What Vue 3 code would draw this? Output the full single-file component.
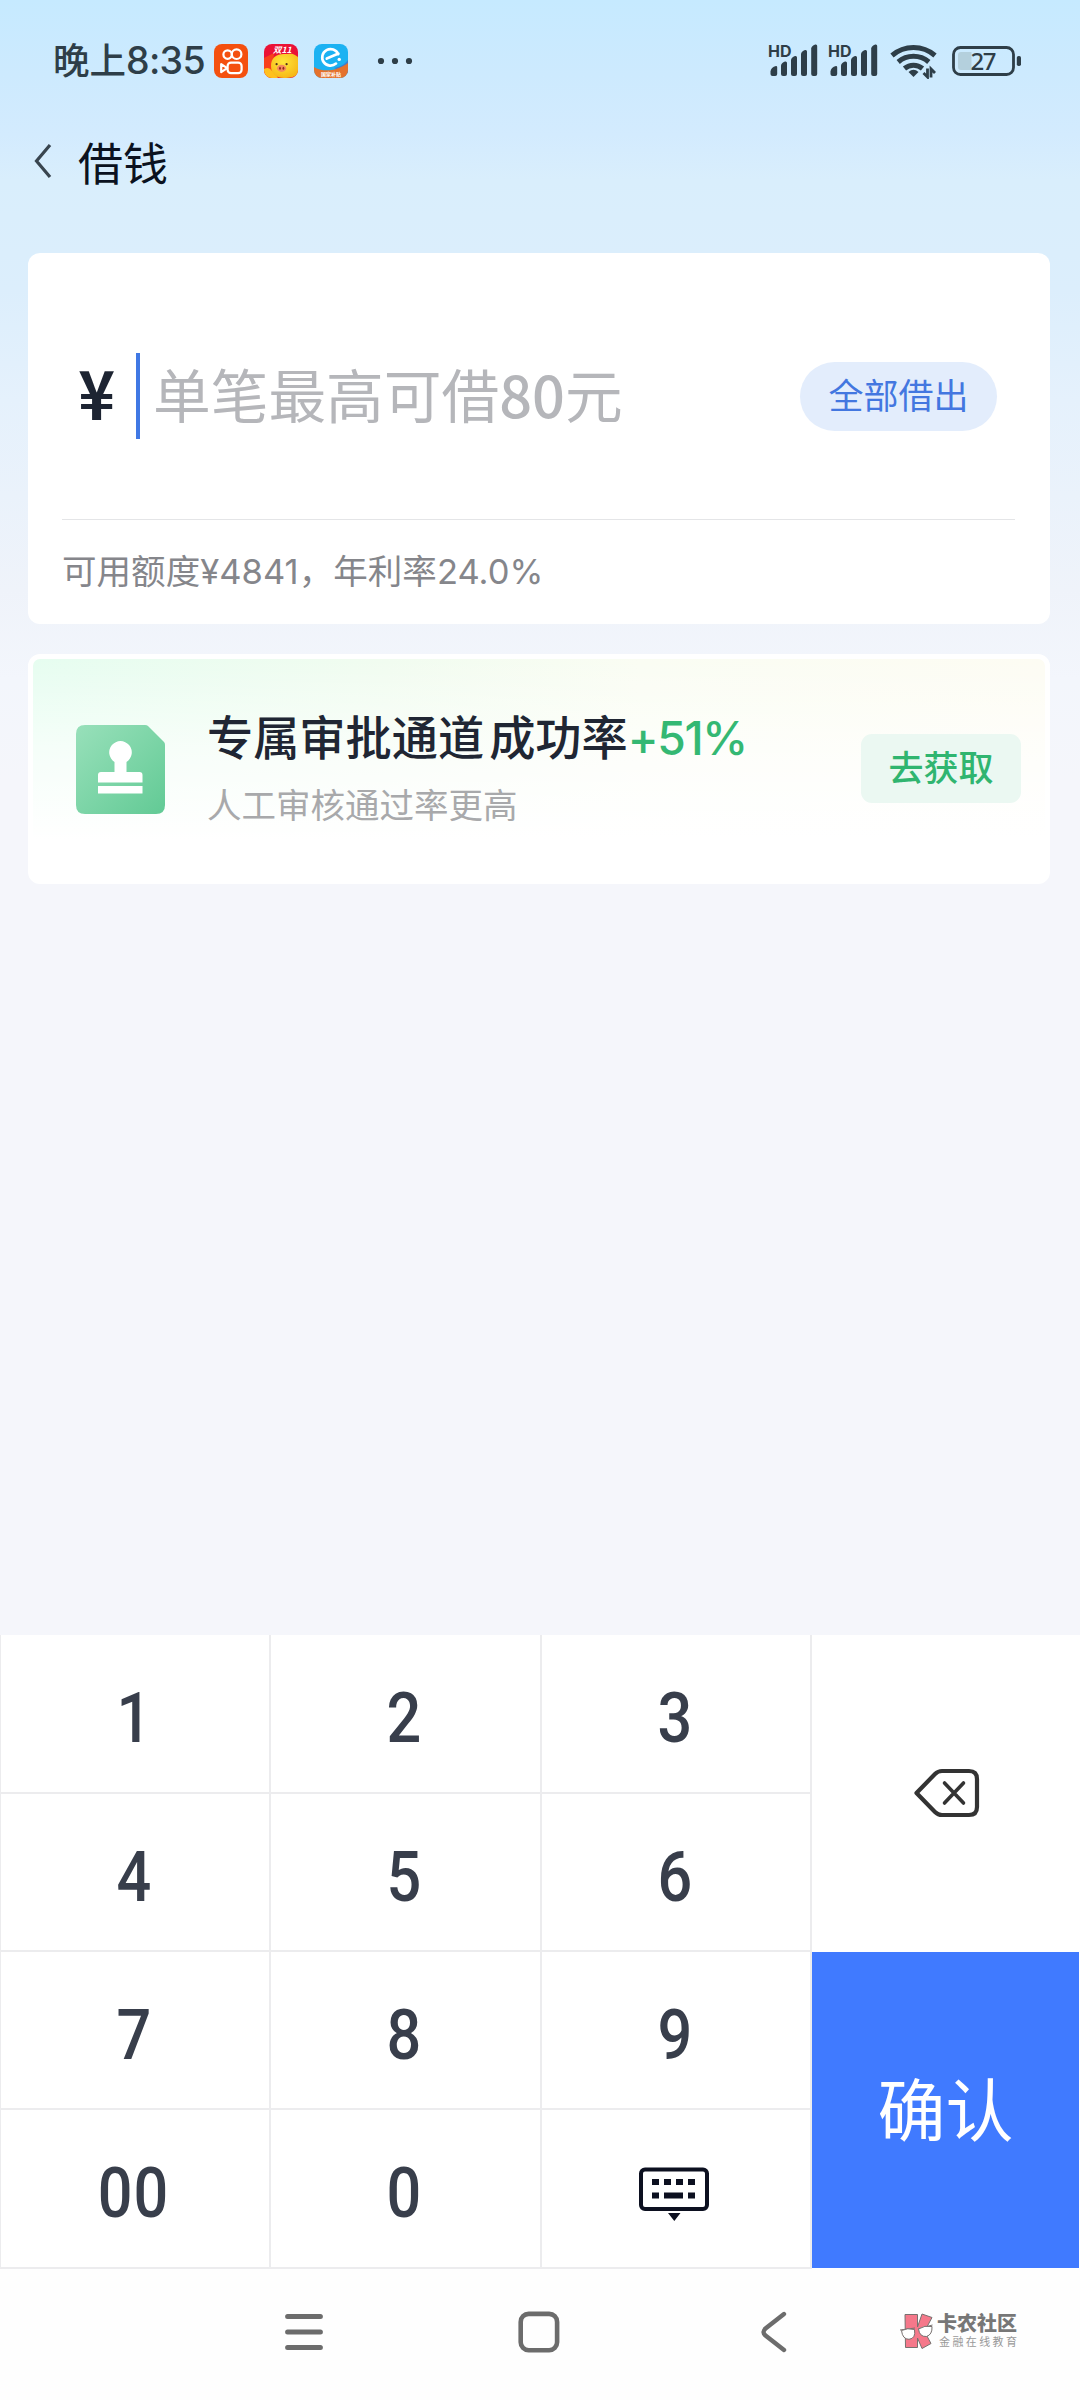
<script setup>
import { ref } from 'vue'

const keys = ['1', '2', '3', '4', '5', '6', '7', '8', '9', '00', '0']
const amount = ref('')

function press(key) {
  amount.value += key
}
</script>

<template>
  <div class="screen">
    <header class="status">
      <div class="clock">晚上<span class="time">8:35</span></div>
      <div class="apps">
        <svg width="34" height="34" viewBox="0 0 34 34">
          <rect width="34" height="34" rx="8" fill="#f4500f" />
          <g fill="none" stroke="#fff" stroke-width="2.2" stroke-linejoin="round">
            <circle cx="13.6" cy="10.6" r="4.2" />
            <circle cx="22.6" cy="10.2" r="4.8" />
            <rect x="13.6" y="18.6" width="14" height="10.6" rx="3.4" />
            <path d="M7.2 20.2v8l6-4z" />
          </g>
        </svg>
        <svg width="34" height="34" viewBox="0 0 34 34">
          <defs>
            <clipPath id="pigClip"><rect width="34" height="34" rx="8" /></clipPath>
            <radialGradient id="pigFace" cx="45%" cy="35%" r="70%">
              <stop offset="0" stop-color="#ffe63a" />
              <stop offset="1" stop-color="#f6b516" />
            </radialGradient>
          </defs>
          <g clip-path="url(#pigClip)">
            <rect width="34" height="34" fill="#ea1236" />
            <path d="M0 14L10 9 8 34H0z" fill="#f8401c" />
            <path d="M0 34V25q5-3 8 2l4 4 2 3z" fill="#ffc01e" />
            <path d="M7 22C7 14 12 10 20 10c6 0 8-1 11 1l3 2v17c-3 3-8 4-14 4C12 34 7 30 7 22z" fill="url(#pigFace)" />
            <ellipse cx="17.6" cy="24.3" rx="4.6" ry="3.6" fill="#f58a5c" />
            <ellipse cx="16" cy="24.3" rx=".9" ry="1.5" fill="#8f2b1c" />
            <ellipse cx="19.4" cy="24.3" rx=".9" ry="1.5" fill="#8f2b1c" />
            <circle cx="12.6" cy="20.2" r="1.1" fill="#53301a" />
            <circle cx="22.6" cy="20.2" r="1.1" fill="#53301a" />
            <text x="9" y="8.8" class="sale">双11</text>
          </g>
        </svg>
        <svg width="34" height="34" viewBox="0 0 34 34">
          <defs>
            <clipPath id="eleClip"><rect width="34" height="34" rx="8" /></clipPath>
          </defs>
          <g clip-path="url(#eleClip)">
            <rect width="34" height="34" fill="#1cb2f2" />
            <path d="M34 16c-4 5-8 7-14 8L34 30z" fill="#3c7fd0" />
            <path d="M0 23c8 5 22 5 34-4v15H0z" fill="#e4712c" />
            <path d="M24.2 10.2A8.3 8.3 0 1 0 22 19.6M12.8 14.6l11.6-5" fill="none" stroke="#fff" stroke-width="2.7" stroke-linecap="round" />
            <circle cx="25.2" cy="15.4" r="1.7" fill="#fff" />
            <text x="7" y="32.4" class="tiny">国家补贴</text>
          </g>
        </svg>
      </div>
      <svg class="more" width="36" height="8" viewBox="0 0 36 8" fill="#2e3e48">
        <circle cx="4" cy="4" r="3.1" /><circle cx="18" cy="4" r="3.1" /><circle cx="32" cy="4" r="3.1" />
      </svg>
      <div class="signals">
        <svg v-for="n in 2" :key="n" width="60" height="44" viewBox="0 -4 60 44">
          <text x="0" y="13.6" class="hd">HD</text>
          <g fill="#2e3e48">
            <path d="M2.500 30v-1.500q.5-4.500 5.500-5.500 1.200 0 1.200 1.200V31q0 2-2 2H4.500q-2 0-2-2z" />
            <path d="M13 31V22.500q.3-2.500 4-4 2-.4 2 1.500V31q0 2-2 2h-2q-2 0-2-2z" />
            <path d="M23 31V17q.3-2.500 4-4 2-.4 2 1.500V31q0 2-2 2h-2q-2 0-2-2z" />
            <path d="M33 31V11q.3-2.500 4-4 2-.4 2 1.500V31q0 2-2 2h-2q-2 0-2-2z" />
            <path d="M43.200 31V5.500q.3-2.500 4-4 2-.4 2 1.500V31q0 2-2 2h-2q-2 0-2-2z" />
          </g>
        </svg>
      </div>
      <svg class="wifi" width="48" height="36" viewBox="0 0 48 36">
        <g fill="none" stroke="#2e3e48" stroke-width="5">
          <path d="M2 12.500a33 33 0 0 1 43 0" />
          <path d="M8.200 19a23.500 23.500 0 0 1 30.600 0" />
          <path d="M14.500 25.500a14 14 0 0 1 18 0" />
        </g>
        <path d="M23.500 34l-5-5q5-4.500 10 0z" fill="#2e3e48" />
        <path d="M33.500 30l4 4V25.500M45 30l-4-4v8.500" fill="none" stroke="#2e3e48" stroke-width="2.800" />
      </svg>
      <svg class="battery" width="70" height="40" viewBox="0 -5 70 40">
        <rect x="1.500" y="1.500" width="60" height="27" rx="7" fill="none" stroke="#2e3e48" stroke-width="2.800" />
        <path d="M9 6h10.500v18H9q-3 0-3-3V9q0-3 3-3z" fill="#b4d0dd" />
        <rect x="64.800" y="10" width="4.200" height="10" rx="1.800" fill="#2e3e48" />
        <text x="18.500" y="23.800" class="level">27</text>
      </svg>
    </header>

    <nav class="title-bar">
      <svg width="18" height="36" viewBox="0 0 18 36">
        <path d="M16 2L2.500 18 16 34" fill="none" stroke="#39454f" stroke-width="3.200" />
      </svg>
      <h1>借钱</h1>
    </nav>

    <section class="card loan">
      <div class="amount">
        <span class="yen">¥</span>
        <span class="caret"></span>
        <span v-if="!amount" class="placeholder">单笔最高可借<b>80</b>元</span>
        <span v-else class="placeholder">{{ amount }}</span>
        <button class="all">全部借出</button>
      </div>
      <p class="quota">可用额度¥4841，年利率24.0%</p>
    </section>

    <section class="card promo">
      <svg class="stamp" width="90" height="90" viewBox="0 0 90 90">
        <defs>
          <linearGradient id="stampFill" x1="0" y1="0" x2="1" y2="1">
            <stop offset="0" stop-color="#98e0ba" />
            <stop offset="1" stop-color="#62ca95" />
          </linearGradient>
        </defs>
        <path d="M9 0H69q2 0 3 1L88 17q1 1 1 3V80q0 9-9 9H9q-9 0-9-9V9Q0 0 9 0z" fill="url(#stampFill)" />
        <g fill="#fff">
          <path d="M38.500 47V37a11.300 11.300 0 1 1 12 0v10h13q3 0 3 3v7.500H22V50q0-3 3-3z" />
          <rect x="22" y="61" width="44.500" height="7.500" />
        </g>
      </svg>
      <div class="copy">
        <h2>专属审批通道<i></i>成功率<em>+51%</em></h2>
        <p>人工审核通过率更高</p>
      </div>
      <button class="get">去获取</button>
    </section>

    <section class="keypad">
      <div class="digits">
        <button v-for="key in keys" :key="key" @click="press(key)"><span>{{ key }}</span></button>
        <button>
          <svg class="kbd" width="70" height="56" viewBox="0 0 70 56" fill="#0c1020">
            <rect x="2" y="2.500" width="66" height="39.500" rx="4" fill="none" stroke="#0c1020" stroke-width="4" />
            <path d="M13 12h7v6h-7zM25 12h7v6h-7zM37 12h7v6h-7zM49 12h7v6h-7zM13 25.500h7v6h-7zM25 25.500h19v6H25zM49 25.500h7v6h-7zM29 46h12.500l-6.200 8z" />
          </svg>
        </button>
      </div>
      <div class="actions">
        <button class="delete">
          <svg width="68" height="50" viewBox="0 0 68 50" fill="none" stroke="#333">
            <path d="M3.500 25L22 6q3-3 7-3H56q8 0 8 8V39q0 8-8 8H29q-4 0-7-3z" stroke-width="4.200" stroke-linejoin="round" />
            <path d="M31.500 15l19 20M50.500 15L31.500 35" stroke-width="3.600" stroke-linecap="round" />
          </svg>
        </button>
        <button class="confirm">确认</button>
      </div>
    </section>

    <footer class="system">
      <svg width="38" height="38" viewBox="0 0 38 38" stroke="#6c6c6c" stroke-width="5" stroke-linecap="round">
        <path d="M2.600 3.500h32.800M2.600 19h32.800M2.600 34.500h32.800" />
      </svg>
      <svg width="42" height="42" viewBox="0 0 42 42">
        <rect x="2.700" y="2.900" width="36.400" height="36.400" rx="8" fill="none" stroke="#6c6c6c" stroke-width="4.600" />
      </svg>
      <svg width="28" height="42" viewBox="0 0 28 42">
        <path d="M24 3L5.500 17.500q-4 3.500 0 7L24 39" fill="none" stroke="#6c6c6c" stroke-width="4.400" stroke-linecap="round" />
      </svg>
      <div class="brand">
        <svg width="36" height="37" viewBox="0 0 36 37" stroke="#77716f" stroke-width="1">
          <path d="M6 1.500h12.500V14L23 1l10 3.500-7.500 14L32 30.500l-9 5L18.500 25v9.500H6.500z" fill="#f5788a" />
          <path d="M1 17l15-2M19 16l14.500-4" fill="none" />
          <path d="M2.500 17.500q6-3 13-1 1.500 9-5.500 9.800-6.500 0-7.500-8.800zM19.500 16q6-4 13.500-2.500.5 8-5.500 10-7 .5-8-7.500z" fill="#fff" />
        </svg>
        <div class="brand-text">
          <strong>卡农社区</strong>
          <small>金融在线教育</small>
        </div>
      </div>
    </footer>
  </div>
</template>

<style>
body {
  margin: 0;
  background: #f5f6fb;
}
</style>

<style scoped>
.screen {
  width: 1080px;
  height: 2400px;
  overflow: hidden;
  display: flex;
  flex-direction: column;
  box-sizing: border-box;
  font-family: Inter, "Noto Sans CJK SC", sans-serif;
  background: linear-gradient(180deg, #c6eaff 0, #cdeafe 75px, #d3ebfe 135px, #d9eefc 180px, #dceefc 290px, #e5f1fc 400px, #eff3fa 590px, #f3f6fc 680px, #f5f6fb 780px);
}
svg {
  display: block;
  flex: none;
}
button {
  border: 0;
  padding: 0;
  margin: 0;
  background: none;
  font: inherit;
}
h1, h2, p {
  margin: 0;
  font-weight: 400;
}
.status {
  display: flex;
  align-items: center;
  height: 122px;
  padding-left: 53px;
  flex: none;
  color: #2e3e48;
}
.clock {
  width: 161px;
  font-size: 36.500px;
  font-weight: 500;
  white-space: nowrap;
  line-height: 44px;
}
.time {
  font-size: 37.500px;
  letter-spacing: -.7px;
}
.apps {
  display: flex;
  gap: 16px;
}
.more {
  margin-left: 29px;
}
.signals {
  display: flex;
  margin-left: 355px;
}
.hd {
  font: 700 16px Inter, sans-serif;
  fill: #2e3e48;
}
.sale {
  font: italic 700 8.500px "Noto Sans CJK SC", sans-serif;
  fill: #fff;
}
.tiny {
  font: 700 5px "Noto Sans CJK SC", sans-serif;
  fill: #fff;
}
.level {
  font: 500 24px "Noto Sans", sans-serif;
  letter-spacing: -1.500px;
  fill: #2e3e48;
}
.wifi {
  margin-left: 2px;
}
.battery {
  margin-left: 14px;
}
.title-bar {
  display: flex;
  align-items: center;
  height: 80px;
  padding-left: 34px;
  margin-bottom: 51px;
  flex: none;
}
.title-bar svg {
  margin-bottom: 2px;
}
.title-bar h1 {
  margin-left: 26px;
  font-size: 45px;
  line-height: 80px;
  padding-top: 5px;
  color: #0b1220;
}
.card {
  margin: 0 30px 0 28px;
  border-radius: 12px;
  background: #fff;
  box-sizing: border-box;
  flex: none;
}
.loan {
  height: 371px;
  padding: 0 35px 0 34px;
}
.amount {
  display: flex;
  align-items: center;
  height: 267px;
  padding: 20px 18px 0 16px;
  border-bottom: 1px solid #e4e5e7;
  box-sizing: border-box;
}
.yen {
  width: 58px;
  margin-bottom: 10px;
  font: 700 67px/80px "Noto Sans CJK SC", sans-serif;
  color: #1d2432;
  transform: scaleX(.93);
  transform-origin: 4px 50%;
}
.caret {
  width: 4px;
  height: 86px;
  background: #4078e4;
}
.placeholder {
  margin: 0 0 2px 13px;
  font-size: 57.700px;
  line-height: 80px;
  white-space: nowrap;
  color: #b5b6ba;
}
.placeholder b {
  font-family: "Noto Sans CJK SC", sans-serif;
  font-weight: 500;
}
.all {
  width: 197px;
  height: 69px;
  margin-left: auto;
  border-radius: 35px;
  background: #e3edfc;
  color: #4377e0;
  font-size: 35px;
  line-height: 69px;
}
.quota {
  font-size: 34.500px;
  line-height: 104px;
  color: #85868b;
  letter-spacing: .05px;
}
.promo {
  display: flex;
  align-items: flex-start;
  height: 230px;
  margin-top: 30px;
  padding: 5px 24px 0;
  border: 5px solid #fff;
  background:
    linear-gradient(180deg, rgba(255, 255, 255, 0) 0, rgba(255, 255, 255, .6) 40%, #fff 82%),
    linear-gradient(90deg, #e6fdf0 0, #f1fcf0 35%, #fafdf3 60%, #fdfcf3 100%);
}
.stamp {
  margin: 61px 0 0 19px;
}
.copy {
  margin: 44px 0 0 41px;
}
.copy h2 {
  display: flex;
  align-items: center;
  height: 60px;
  font-size: 46.200px;
  line-height: 60px;
  font-weight: 500;
  color: #202633;
  white-space: nowrap;
}
.copy h2 i {
  width: 5px;
}
.copy em {
  font-style: normal;
  color: #34b873;
  letter-spacing: -1.300px;
  line-height: 54px;
}
.copy p {
  margin-top: 13px;
  font-size: 34.500px;
  line-height: 50px;
  color: #a8a9ab;
}
.get {
  width: 160px;
  height: 69px;
  margin: 70px 0 0 auto;
  border-radius: 11px;
  background: #ebf8f2;
  color: #30b570;
  font-size: 35px;
  font-weight: 500;
  line-height: 69px;
}
.keypad {
  display: flex;
  height: 634px;
  margin-top: 751px;
  background: #fff;
  flex: none;
}
.digits {
  display: grid;
  grid-template-columns: 270px 271px 270px;
  grid-template-rows: 159px 158px 158px 159px;
  width: 811px;
  border-left: 1px solid #ececee;
  box-sizing: border-box;
}
.digits button {
  display: flex;
  align-items: center;
  justify-content: center;
  border: solid #ececee;
  border-width: 0 2px 2px 0;
  box-sizing: border-box;
  font: 500 69.500px/80px Roboto, sans-serif;
  color: #383e4b;
}
.digits span {
  transform: scaleX(.88);
  letter-spacing: 1px;
  margin: 11px 2px 0 0;
}
.kbd {
  margin: 12px 4px 0 0;
}
.actions {
  display: flex;
  flex-direction: column;
  flex: 1;
  padding: 0 1px 0;
}
.delete {
  display: flex;
  align-items: center;
  justify-content: center;
  height: 317px;
  padding: 0 0 1px 3px;
  box-sizing: border-box;
}
.confirm {
  height: 316px;
  padding-top: 3px;
  box-sizing: border-box;
  background: #407aff;
  color: #fff;
  font-size: 68px;
  line-height: 313px;
}
.system {
  display: flex;
  align-items: center;
  height: 131px;
  padding-left: 285px;
  background: #fefefe;
  box-sizing: border-box;
}
.system > svg {
  margin-bottom: 5px;
}
.system > svg:nth-of-type(2) {
  margin-left: 195px;
}
.system > svg:nth-of-type(3) {
  margin-left: 200px;
}
.brand {
  display: flex;
  margin: 0 0 7px 111px;
}
.brand-text {
  display: flex;
  flex-direction: column;
  margin-left: 2px;
  color: #777;
  white-space: nowrap;
}
.brand-text strong {
  font-size: 20px;
  font-weight: 900;
  line-height: 22px;
}
.brand-text small {
  font-size: 11px;
  line-height: 14px;
  letter-spacing: 2.400px;
  padding-left: 2px;
  color: #999;
}
</style>
